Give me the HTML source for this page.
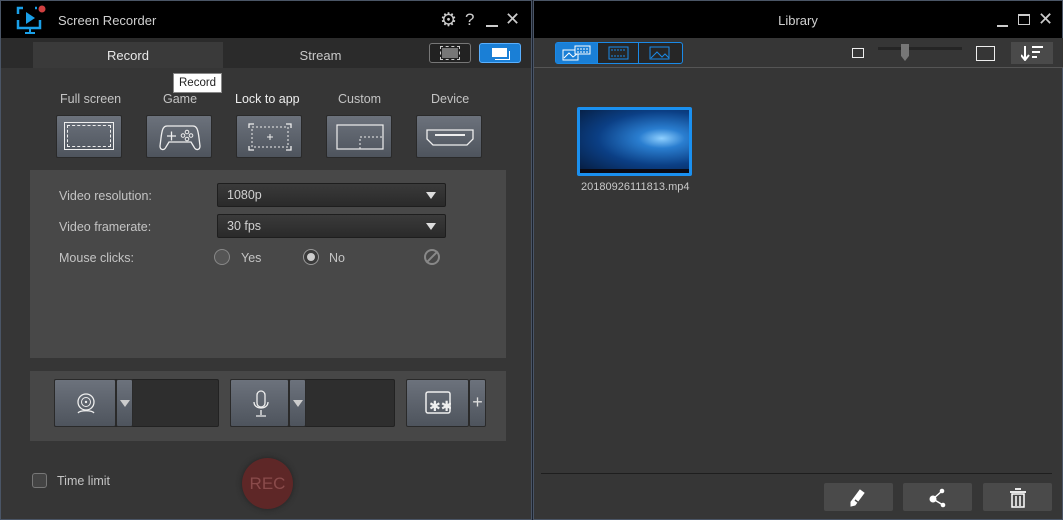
<!DOCTYPE html>
<html><head><meta charset="utf-8"><style>
*{margin:0;padding:0;box-sizing:border-box}
body{width:1063px;height:520px;background:#1c2330;font-family:"Liberation Sans",sans-serif;position:relative;overflow:hidden;font-size:13px;color:#c8c8c8}
.a{position:absolute}
.win{position:absolute;top:0;height:520px;background:#363636;border:1px solid #4a5566}
.tb{position:absolute;left:0;right:0;top:0;height:37px;background:#000}
.btn{position:absolute;background:linear-gradient(#6c727c,#4e545d);border:1px solid #2a2a2a;border-radius:2px}
.lbl{position:absolute;font-size:12.5px;color:#c4c4c4}
.dd{position:absolute;left:216px;width:229px;height:24px;background:linear-gradient(#3a3a3a,#2a2a2a);border:1px solid #1e1e1e;border-radius:2px;color:#d0d0d0;padding:4px 9px;font-size:12.5px}
.dd:after{content:"";position:absolute;right:9px;top:8px;border-left:5px solid transparent;border-right:5px solid transparent;border-top:7px solid #ddd}
.bb{position:absolute;top:482px;width:69px;height:28px;background:#4a4a4a;border-radius:2px}
</style></head><body>
<!-- LEFT -->
<div class="win" style="left:0;width:532px;background:#363636">
 <div class="tb">
  <svg class="a" style="left:14px;top:4px" width="32" height="30"><path d="M3 9V3h5M22 3h-2M3 15v8h22v-8" stroke="#1aa0e8" stroke-width="2.5" fill="none"/><path d="M11 7l9 6-9 6z" fill="#1aa0e8"/><path d="M15 23v4M10 28h10" stroke="#1aa0e8" stroke-width="2"/><circle cx="27" cy="4" r="3.5" fill="#d04040"/></svg>
  <div class="a" style="left:57px;top:12px;color:#d0d0d0;font-size:13px">Screen Recorder</div>
  <div class="a" style="left:439px;top:8px;color:#ccc;font-size:19px">⚙</div>
  <div class="a" style="left:464px;top:9px;color:#ccc;font-size:17px">?</div>
  <div class="a" style="left:485px;top:24px;width:12px;height:1.5px;background:#ccc"></div>
  <div class="a" style="left:504px;top:8px;color:#ccc;font-size:18px">✕</div>
 </div>
 <div class="a" style="left:0;top:37px;width:530px;height:30px;background:#2b2b2b"></div>
 <div class="a" style="left:32px;top:41px;width:190px;height:26px;background:#3a3a3a;color:#e8e8e8;text-align:center;padding-top:6px;font-size:13px">Record</div>
 <div class="a" style="left:222px;top:41px;width:195px;height:26px;color:#c8c8c8;text-align:center;padding-top:6px;font-size:13px">Stream</div>
 <div class="a" style="left:428px;top:42px;width:42px;height:20px;border:1px solid #777;border-radius:3px;background:#222"><div class="a" style="left:12px;top:4px;width:16px;height:10px;background:#777;outline:1px dashed #ccc;outline-offset:1px"></div></div>
 <div class="a" style="left:478px;top:42px;width:42px;height:20px;border:1px solid #5ab0ff;border-radius:3px;background:#1a7fd6"><div class="a" style="left:12px;top:4px;width:15px;height:9px;border:1.5px solid #fff;background:#fff"></div><div class="a" style="left:15px;top:7px;width:15px;height:9px;border-right:1.5px solid #fff;border-bottom:1.5px solid #fff"></div></div>
 <div class="a" style="left:172px;top:72px;width:49px;height:20px;background:#fff;border:1px solid #888;color:#222;font-size:11.5px;padding:3px 5px">Record</div>
 <div class="lbl" style="left:59px;top:91px">Full screen</div>
 <div class="lbl" style="left:162px;top:91px">Game</div>
 <div class="lbl" style="left:234px;top:91px;color:#eee">Lock to app</div>
 <div class="lbl" style="left:337px;top:91px">Custom</div>
 <div class="lbl" style="left:430px;top:91px">Device</div>
 <div class="btn" style="left:55px;top:114px;width:66px;height:43px"><div class="a" style="left:7px;top:6px;width:50px;height:28px;border:1px solid #eee"><div class="a" style="left:2px;top:2px;width:44px;height:22px;border:1px dashed #eee"></div></div></div>
 <div class="btn" style="left:145px;top:114px;width:66px;height:43px"><svg class="a" style="left:12px;top:6px" width="42" height="30"><path d="M8 4h26c4 0 5 4 6 12l1 8c0 4-4 5-6 1l-3-5H10l-3 5c-2 4-6 3-6-1l1-8C3 8 4 4 8 4z" stroke="#eee" fill="none" stroke-width="1.3"/><path d="M8 14h9M12.5 9.5v9" stroke="#eee" stroke-width="1.3"/><circle cx="28" cy="10" r="1.8" stroke="#eee" fill="none"/><circle cx="28" cy="17" r="1.8" stroke="#eee" fill="none"/><circle cx="24" cy="13.5" r="1.8" stroke="#eee" fill="none"/><circle cx="32" cy="13.5" r="1.8" stroke="#eee" fill="none"/></svg></div>
 <div class="btn" style="left:235px;top:114px;width:66px;height:43px"><svg class="a" style="left:11px;top:7px" width="44" height="28"><path d="M1 5V1h5M38 1h5v4M43 23v4h-5M6 27H1v-4" stroke="#eee" fill="none" stroke-width="1.3"/><rect x="4" y="4" width="36" height="20" stroke="#eee" stroke-dasharray="2 2" fill="none"/><path d="M19 14h6M22 11v6" stroke="#eee"/></svg></div>
 <div class="btn" style="left:325px;top:114px;width:66px;height:43px"><svg class="a" style="left:9px;top:8px" width="48" height="26"><rect x="1" y="1" width="46" height="24" stroke="#eee" fill="none" stroke-width="1.2"/><path d="M24 25V13h23" stroke="#eee" stroke-dasharray="2 2" fill="none"/></svg></div>
 <div class="btn" style="left:415px;top:114px;width:66px;height:43px"><svg class="a" style="left:9px;top:10px" width="48" height="22"><path d="M1 4h46v9l-6 6H7l-6-6z" stroke="#eee" fill="none" stroke-width="1.3"/><path d="M9 9h30" stroke="#eee" stroke-width="2"/></svg></div>
 <div class="a" style="left:29px;top:169px;width:476px;height:188px;background:#484848"></div>
 <div class="lbl" style="left:58px;top:188px">Video resolution:</div>
 <div class="lbl" style="left:58px;top:219px">Video framerate:</div>
 <div class="lbl" style="left:58px;top:250px">Mouse clicks:</div>
 <div class="dd" style="top:182px">1080p</div>
 <div class="dd" style="top:213px">30 fps</div>
 <div class="a" style="left:213px;top:248px;width:16px;height:16px;border-radius:50%;border:1px solid #888;background:#555"></div>
 <div class="lbl" style="left:240px;top:250px">Yes</div>
 <div class="a" style="left:302px;top:248px;width:16px;height:16px;border-radius:50%;border:1px solid #999;background:#3a3a3a"><div class="a" style="left:3px;top:3px;width:8px;height:8px;border-radius:50%;background:#ccc"></div></div>
 <div class="lbl" style="left:328px;top:250px">No</div>
 <div class="a" style="left:423px;top:248px;width:16px;height:16px;border-radius:50%;border:2px solid #888"><div class="a" style="left:5px;top:-2px;width:2px;height:16px;background:#888;transform:rotate(45deg)"></div></div>
 <div class="a" style="left:29px;top:370px;width:476px;height:70px;background:#474747"></div>
 <div class="a" style="left:53px;top:378px;width:165px;height:48px;background:#2e2e2e;border:1px solid #222;border-radius:2px"></div>
 <div class="btn" style="left:53px;top:378px;width:62px;height:48px"><svg class="a" style="left:20px;top:12px" width="22" height="24"><circle cx="11" cy="10" r="8" stroke="#eee" fill="none" stroke-width="1.3"/><circle cx="11" cy="10" r="4.5" stroke="#eee" fill="none"/><circle cx="11" cy="10" r="1.2" fill="#eee"/><path d="M3 21c2-3 14-3 16 0" stroke="#eee" fill="none" stroke-width="1.3"/></svg></div>
 <div class="btn" style="left:115px;top:378px;width:17px;height:48px"><div class="a" style="left:3px;top:20px;border-left:5px solid transparent;border-right:5px solid transparent;border-top:7px solid #ccc"></div></div>
 <div class="a" style="left:229px;top:378px;width:165px;height:48px;background:#2e2e2e;border:1px solid #222;border-radius:2px"></div>
 <div class="btn" style="left:229px;top:378px;width:59px;height:48px"><svg class="a" style="left:21px;top:10px" width="18" height="28"><rect x="5" y="1" width="8" height="16" rx="4" stroke="#eee" fill="none" stroke-width="1.3"/><path d="M2 12c0 8 14 8 14 0M9 20v5M4 26h10" stroke="#eee" fill="none" stroke-width="1.3"/></svg></div>
 <div class="btn" style="left:288px;top:378px;width:17px;height:48px"><div class="a" style="left:3px;top:20px;border-left:5px solid transparent;border-right:5px solid transparent;border-top:7px solid #ccc"></div></div>
 <div class="btn" style="left:405px;top:378px;width:63px;height:48px"><svg class="a" style="left:18px;top:11px" width="26" height="24"><rect x="1" y="1" width="24" height="21" rx="2" stroke="#eee" fill="none" stroke-width="1.5"/><text x="4" y="20" fill="#eee" font-size="14" font-family="Liberation Sans">✱✱</text></svg></div>
 <div class="btn" style="left:468px;top:378px;width:17px;height:48px;color:#ddd;font-size:18px;text-align:center;padding-top:12px">+</div>
 <div class="a" style="left:31px;top:472px;width:15px;height:15px;border:1px solid #777;border-radius:3px;background:#444"></div>
 <div class="lbl" style="left:56px;top:473px">Time limit</div>
 <div class="a" style="left:241px;top:457px;width:51px;height:51px;border-radius:50%;background:#5e2727;box-shadow:0 0 6px #222;color:#8a4b4b;font-size:17px;text-align:center;line-height:51px">REC</div>
</div>
<!-- RIGHT -->
<div class="win" style="left:533px;width:530px;background:#363636">
 <div class="tb">
  <div class="a" style="left:0;right:0;top:12px;text-align:center;color:#d0d0d0;font-size:13px">Library</div>
  <div class="a" style="left:463px;top:24px;width:11px;height:1.5px;background:#ccc"></div>
  <div class="a" style="left:484px;top:13px;width:12px;height:11px;border:1.5px solid #ccc;border-top-width:2.5px"></div>
  <div class="a" style="left:504px;top:8px;color:#ccc;font-size:18px">✕</div>
 </div>
 <div class="a" style="left:0;top:37px;width:530px;height:30px;background:#363636;border-bottom:1px solid #555"></div>
 <div class="a" style="left:21px;top:41px;width:128px;height:22px;border:1px solid #1a8ae8;border-radius:3px;background:#262626"></div>
 <div class="a" style="left:22px;top:42px;width:41px;height:20px;background:#1a7fd6"></div>
 <svg class="a" style="left:28px;top:44px" width="30" height="16"><rect x="1" y="5" width="15" height="10" stroke="#fff" fill="none"/><path d="M2 13l5-5 4 4 4-3" stroke="#fff" fill="none"/><rect x="13" y="1" width="15" height="8" stroke="#fff" fill="#1a7fd6"/><path d="M15 4h11M15 7h11" stroke="#fff" stroke-dasharray="2 1"/></svg>
 <div class="a" style="left:63px;top:42px;width:1px;height:20px;background:#1a8ae8"></div>
 <div class="a" style="left:104px;top:42px;width:1px;height:20px;background:#1a8ae8"></div>
 <svg class="a" style="left:74px;top:45px" width="22" height="14"><rect x="1" y="1" width="19" height="12" stroke="#1a8ae8" fill="none"/><path d="M3 4h15M3 10h15" stroke="#1a8ae8" stroke-dasharray="2 1"/></svg>
 <svg class="a" style="left:115px;top:45px" width="22" height="14"><rect x="1" y="1" width="19" height="12" stroke="#1a8ae8" fill="none"/><path d="M2 12l6-6 5 5 3-3 4 4" stroke="#1a8ae8" fill="none"/></svg>
 <div class="a" style="left:318px;top:47px;width:12px;height:10px;border:1px solid #eee"></div>
 <div class="a" style="left:344px;top:46px;width:84px;height:3px;background:#252525"></div>
 <div class="a" style="left:367px;top:43px;width:8px;height:17px;background:#777;clip-path:polygon(0 0,100% 0,100% 70%,50% 100%,0 70%)"></div>
 <div class="a" style="left:442px;top:45px;width:19px;height:15px;border:1.5px solid #eee"></div>
 <div class="a" style="left:477px;top:41px;width:42px;height:22px;background:#4a4a4a"></div>
 <svg class="a" style="left:487px;top:44px" width="24" height="16"><path d="M4 1v13M0 10l4 5 4-5" stroke="#fff" stroke-width="2" fill="none"/><path d="M11 2h11M11 7h8M11 12h5" stroke="#fff" stroke-width="2"/></svg>
 <div class="a" style="left:43px;top:106px;width:115px;height:69px;border:3px solid #1a90f0;border-radius:2px;background:radial-gradient(ellipse at 75% 45%,#8fd0ff 0%,#2a7ed0 20%,#0b3f85 55%,#061a3a 100%)"><div class="a" style="left:0;right:0;bottom:0;height:4px;background:#0a0a14"></div></div>
 <div class="a" style="left:47px;top:180px;color:#c8c8c8;font-size:11px">20180926111813.mp4</div>
 <div class="a" style="left:7px;top:472px;width:511px;height:1px;background:#1e1e1e"></div>
 <div class="bb" style="left:290px"><svg class="a" style="left:26px;top:6px" width="16" height="18"><path d="M10 1l4 3-9 12-4 1 0-4z" stroke="#fff" fill="#fff" stroke-width="1"/><path d="M5 11l4 3" stroke="#4a4a4a" stroke-width="1.5"/></svg></div>
 <div class="bb" style="left:369px"><svg class="a" style="left:26px;top:5px" width="18" height="20"><circle cx="4" cy="11" r="3.5" fill="#fff"/><circle cx="13" cy="3" r="2.3" fill="#fff"/><circle cx="14" cy="17" r="2.3" fill="#fff"/><path d="M4 11L13 3M4 11l10 6" stroke="#fff" stroke-width="1.5"/></svg></div>
 <div class="bb" style="left:449px"><svg class="a" style="left:26px;top:5px" width="18" height="20"><path d="M1 4h16M6 1h6" stroke="#fff" stroke-width="1.8"/><rect x="3" y="6" width="12" height="13" stroke="#fff" fill="none" stroke-width="1.5"/><path d="M7 8v10M11 8v10" stroke="#fff" stroke-width="1.5"/></svg></div>
</div>
</body></html>
